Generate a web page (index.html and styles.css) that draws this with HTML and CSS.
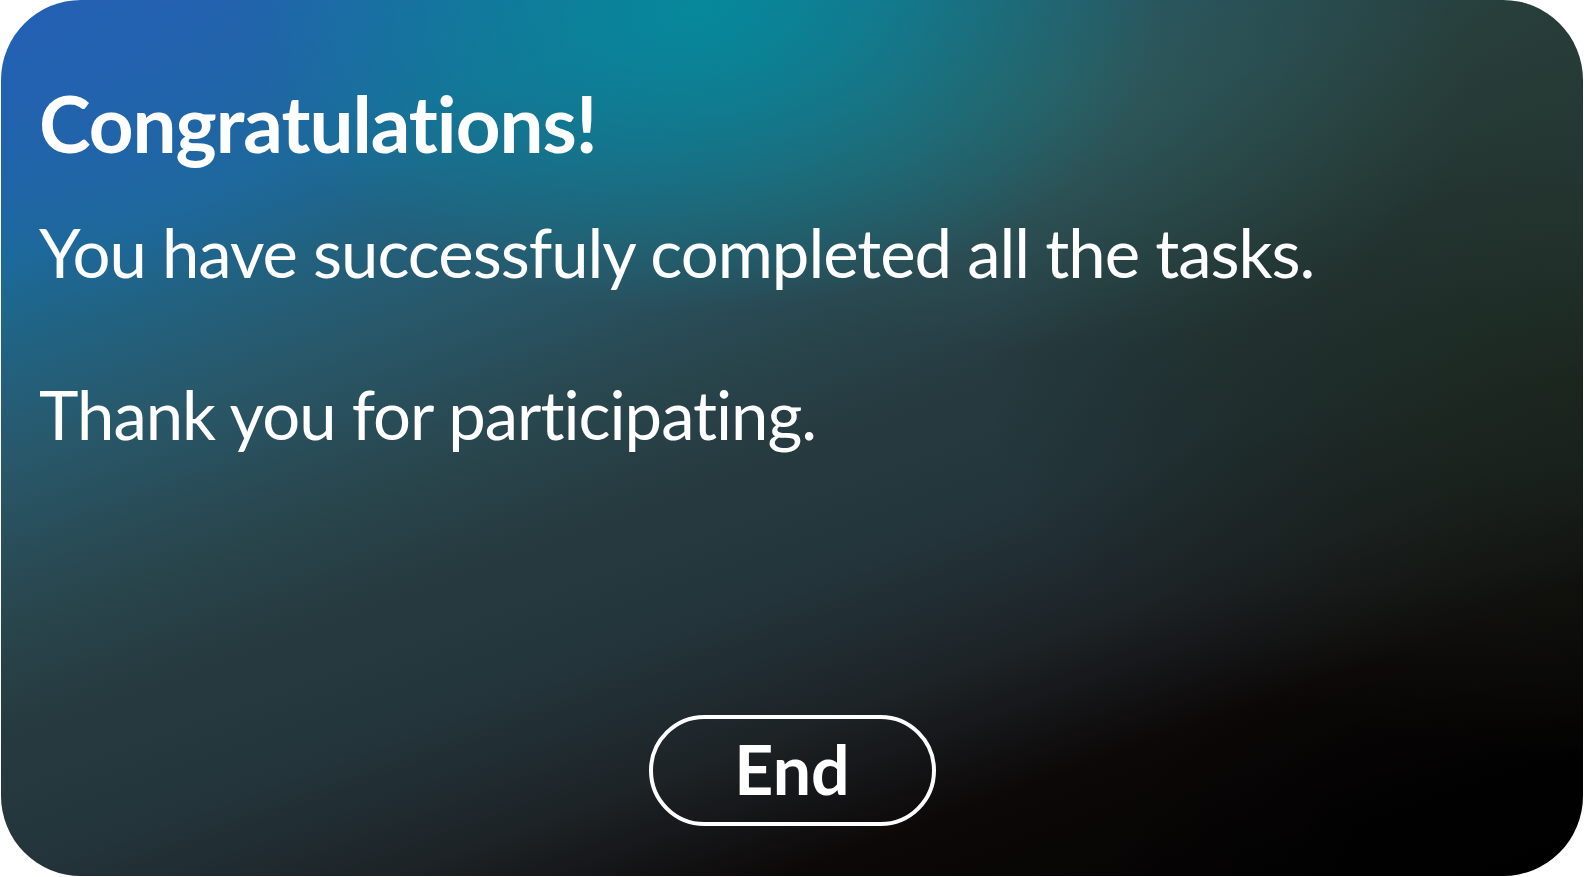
FILE: index.html
```html
<!DOCTYPE html>
<html lang="en">
<head>
<meta charset="utf-8">
<title>Congratulations</title>
<link rel="stylesheet" href="styles.css">
</head>
<body>
<main class="card">
  <h1 class="title">Congratulations!</h1>
  <p class="message">You have successfuly completed all the tasks.<br><br>Thank you for participating.</p>
  <div class="actions">
    <button class="end-btn" type="button">End</button>
  </div>
</main>
</body>
</html>
```
FILE: styles.css
```css
html, body {
  margin: 0;
  padding: 0;
  background: #ffffff;
}

body {
  width: 1584px;
  height: 877px;
  overflow: hidden;
  font-family: Lato, "Open Sans", sans-serif;
  font-variant-ligatures: none;
  color: #ffffff;
}

.card {
  box-sizing: border-box;
  margin: 0 1px;
  height: 876px;
  border-radius: 80px;
  padding: 0 38px;
  display: flex;
  flex-direction: column;
  background:
    radial-gradient(ellipse 460px 300px at 700px 10px, rgba(5, 138, 155, 0.95), rgba(5, 138, 155, 0) 100%),
    radial-gradient(ellipse 480px 320px at 0px 0px, rgba(35, 96, 180, 1), rgba(35, 96, 180, 0) 100%),
    radial-gradient(ellipse 420px 260px at 1050px 90px, rgba(48, 96, 94, 0.6), rgba(48, 96, 94, 0) 100%),
    radial-gradient(ellipse 700px 520px at 1584px 0px, rgba(39, 58, 50, 0.85), rgba(39, 58, 50, 0) 100%),
    radial-gradient(ellipse 600px 380px at 1584px 380px, rgba(22, 30, 20, 0.85), rgba(22, 30, 20, 0) 100%),
    radial-gradient(ellipse 500px 260px at 1584px 877px, rgba(0, 0, 0, 1), rgba(0, 0, 0, 0) 100%),
    linear-gradient(160deg, #2462ae 0%, #1b6b95 18%, #28586a 32%, #29474f 42%, #263b40 50%, #23353b 60%, #1d2327 70%, #0c0808 80%, #000000 100%);
}

.title {
  margin: 73px 0 0 0;
  font-size: 78px;
  line-height: 100px;
  font-weight: 700;
  letter-spacing: -1px;
}

.message {
  margin: 39px 0 0 0;
  font-size: 67px;
  line-height: 81px;
  font-weight: 400;
  letter-spacing: -1px;
}

.actions {
  margin-top: auto;
  margin-bottom: 50px;
  display: flex;
  justify-content: center;
}

.end-btn {
  box-sizing: border-box;
  width: 287px;
  height: 111px;
  border: 4px solid #ffffff;
  border-radius: 56px;
  background: transparent;
  color: #ffffff;
  font-family: Lato, "Open Sans", sans-serif;
  font-size: 68px;
  font-weight: 700;
  line-height: 1;
  padding: 0 0 4px 0;
  cursor: pointer;
}
```
